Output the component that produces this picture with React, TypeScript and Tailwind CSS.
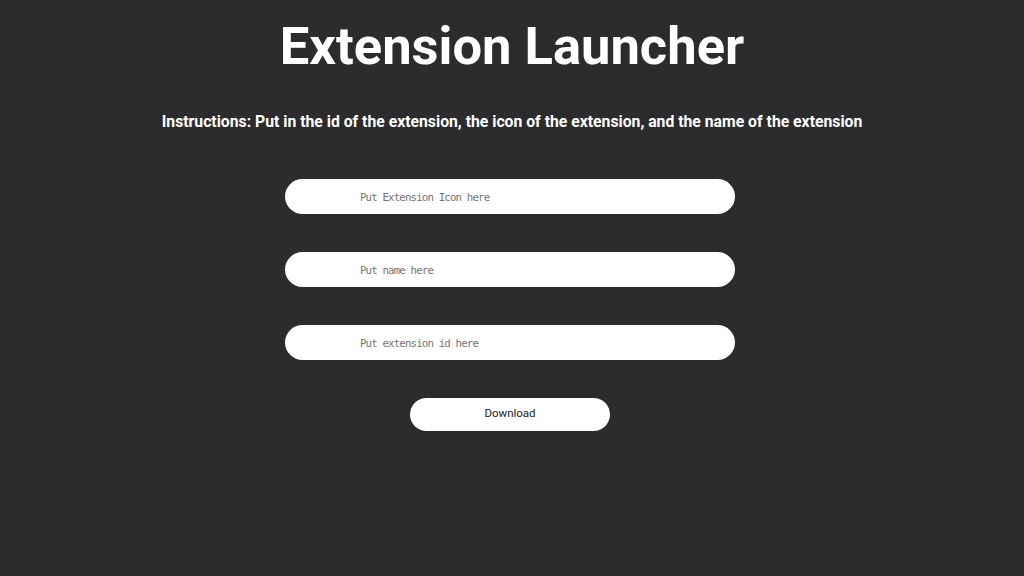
import React from "react";

export default function App() {
  const fields = ["Put Extension Icon here", "Put name here", "Put extension id here"];
  return (
    <div className="w-[1024px] h-[576px] bg-[#2c2c2e] flex flex-col items-center" style={{ fontFamily: "Roboto, 'Liberation Sans', sans-serif" }}>
      <h1 className="mt-[14px] text-[52.5px] leading-[64px] font-bold text-white">Extension Launcher</h1>
      <p className="mt-[34px] text-[15.75px] leading-[20px] font-bold text-white">
        Instructions: Put in the id of the extension, the icon of the extension, and the name of the extension
      </p>
      <div className="mt-[47px] flex flex-col items-center pr-[4px]">
        <div className="flex flex-col gap-[38px]">
          {fields.map((f) => (
            <input
              key={f}
              placeholder={f}
              className="w-[450px] h-[35px] rounded-full bg-white pl-[75px] pt-[2px] text-[10.75px] tracking-[-0.85px] text-black placeholder:text-[#757575] outline-none"
              style={{ fontFamily: "'DejaVu Sans Mono', monospace" }}
            />
          ))}
        </div>
        <button className="mt-[38px] w-[200px] h-[33px] rounded-full bg-white pb-[3px] text-[11.5px] leading-[14px] text-[#222]">Download</button>
      </div>
    </div>
  );
}
